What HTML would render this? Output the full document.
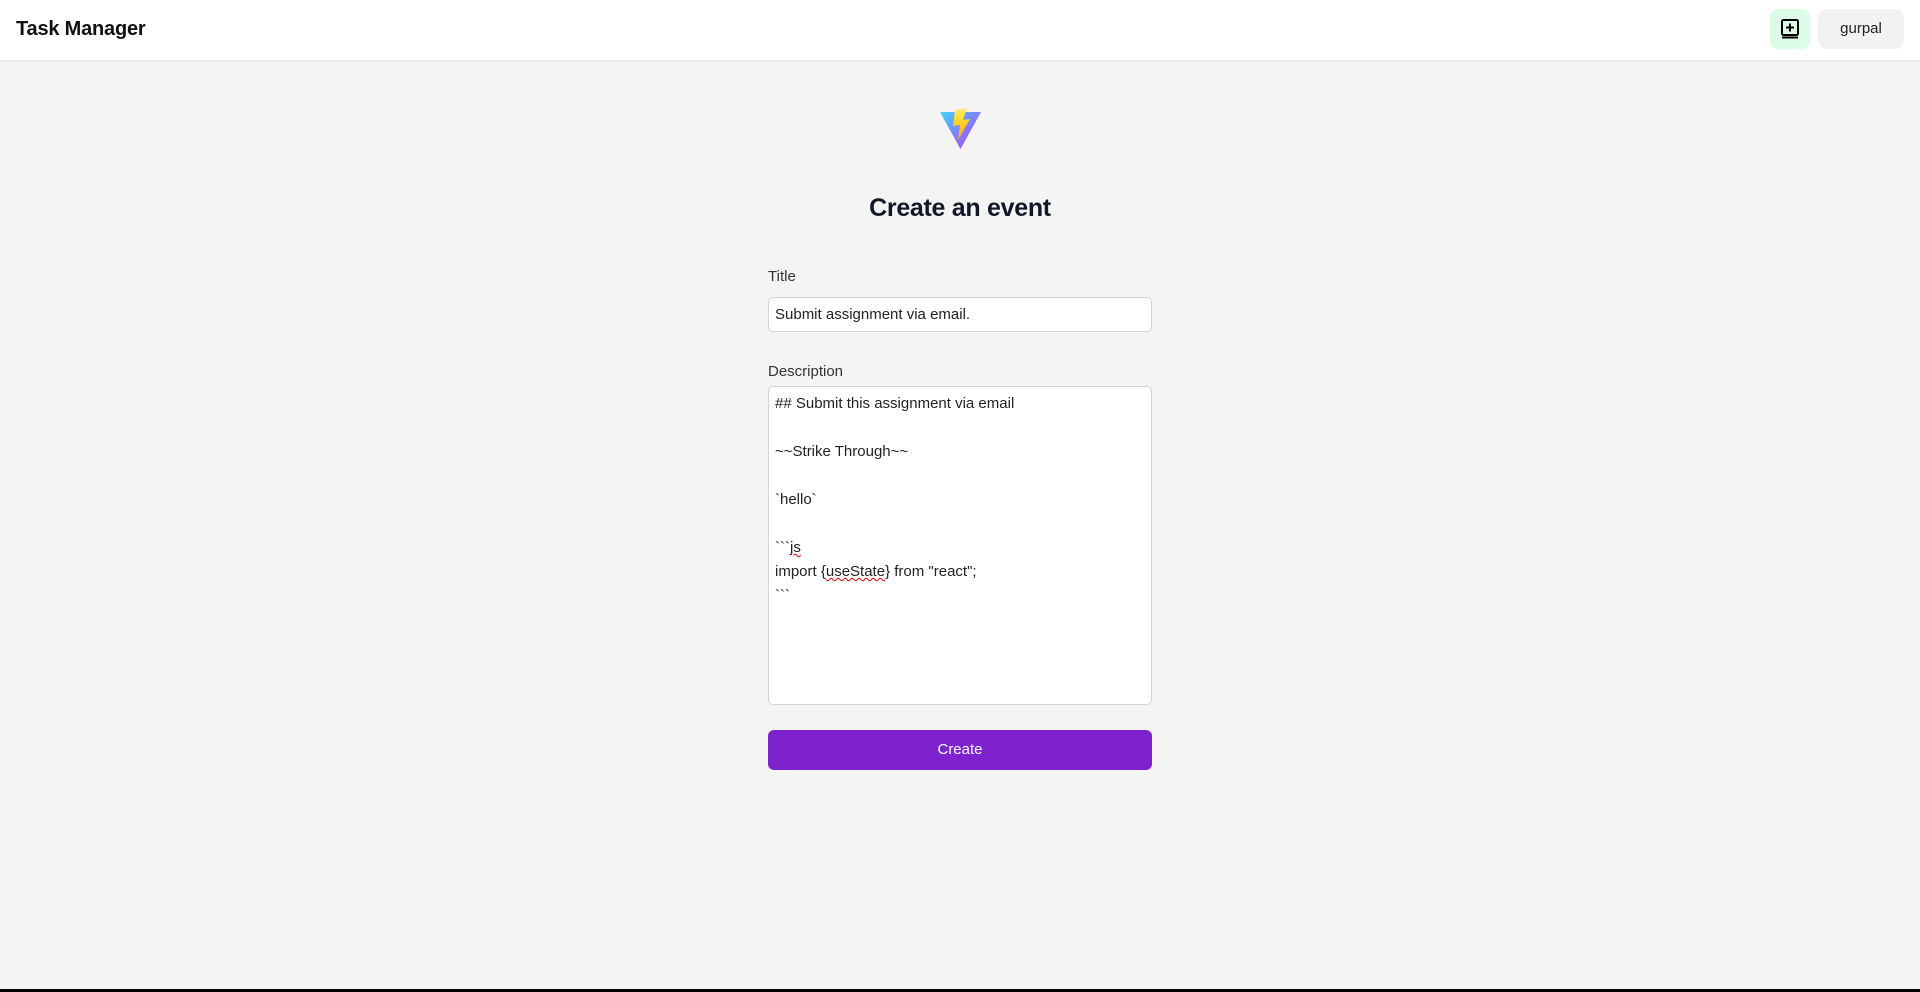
<!DOCTYPE html>
<html><head><meta charset="utf-8"><style>
*{box-sizing:border-box;margin:0;padding:0}
html,body{width:1920px;height:992px;overflow:hidden}
body{background:#f4f4f4;font-family:"Liberation Sans",sans-serif;color:#1f2937;position:relative}
.hdr{position:absolute;left:0;top:0;width:1920px;height:61px;background:#fff;border-bottom:1px solid #e5e5e5;box-shadow:0 1px 2px rgba(0,0,0,.04)}
.brand{position:absolute;left:16px;top:18px;font-size:20px;font-weight:bold;color:#111;letter-spacing:-0.2px}
.ib{position:absolute;left:1770px;top:9px;width:40px;height:40px;background:#dcfce7;border-radius:8px}
.ib svg{position:absolute;left:9px;top:9px}
.ub{position:absolute;left:1818px;top:9px;width:86px;height:40px;background:#f1f2f4;border-radius:9px;text-align:center;line-height:40px;font-size:15px;color:#222}
.logo{position:absolute;left:940px;top:108px}
h1{position:absolute;left:0;width:1920px;top:194px;text-align:center;font-size:25px;font-weight:bold;color:#111827;letter-spacing:-0.3px}
.lbl{position:absolute;left:768px;font-size:15px;color:#333}
.in{position:absolute;left:768px;top:297px;width:384px;height:35px;background:#fff;border:1px solid #d4d4d8;border-radius:5px;padding:0 6px;line-height:33px;font-size:15px;color:#222}
.ta{position:absolute;left:768px;top:386px;width:384px;height:319px;background:#fff;border:1px solid #d4d4d8;border-radius:5px;padding:5px 6px;font-size:15px;line-height:24px;color:#222}
.sq{text-decoration:underline wavy #d00;text-decoration-thickness:1px}
.btn{position:absolute;left:768px;top:730px;width:384px;height:40px;background:#7e22ce;border-radius:6px;color:#fff;text-align:center;line-height:40px;font-size:15px}
.bar{position:absolute;left:0;top:989px;width:1920px;height:3px;background:#000}
</style></head><body>
<div class="hdr">
<div class="brand">Task Manager</div>
<div class="ib"><svg width="22" height="22" viewBox="0 0 22 22" fill="none" stroke="#000" stroke-width="2"><rect x="3" y="2" width="16" height="15" rx="1.5"/><path d="M3 19.5h16M11 5.5v8M7 9.5h8"/></svg></div>
<div class="ub">gurpal</div>
</div>
<svg class="logo" width="41" height="41" viewBox="0 0 41 41">
<defs><linearGradient id="g1" x1="0" y1="0" x2="1" y2="1"><stop offset="0" stop-color="#41d1ff"/><stop offset="1" stop-color="#bd34fe"/></linearGradient>
<linearGradient id="g2" x1="0" y1="0" x2="0" y2="1"><stop offset="0" stop-color="#ffea83"/><stop offset=".3" stop-color="#ffdd35"/><stop offset="1" stop-color="#ffa800"/></linearGradient></defs>
<path d="M0 4 L41 4 L20.5 41 Z" fill="url(#g1)"/>
<path d="M15 2 L27 0 L23 12 L30 11 L18 32 L20 17 L13 18 Z" fill="url(#g2)"/>
</svg>
<h1>Create an event</h1>
<div class="lbl" style="top:268px">Title</div>
<div class="in">Submit assignment via email.</div>
<div class="lbl" style="top:363px">Description</div>
<div class="ta">## Submit this assignment via email<br><br>~~Strike Through~~<br><br>&#96;hello&#96;<br><br>&#96;&#96;&#96;<span class="sq">js</span><br>import {<span class="sq">useState</span>} from "react";<br>&#96;&#96;&#96;</div>
<div class="btn">Create</div>
<div class="bar"></div>
</body></html>
